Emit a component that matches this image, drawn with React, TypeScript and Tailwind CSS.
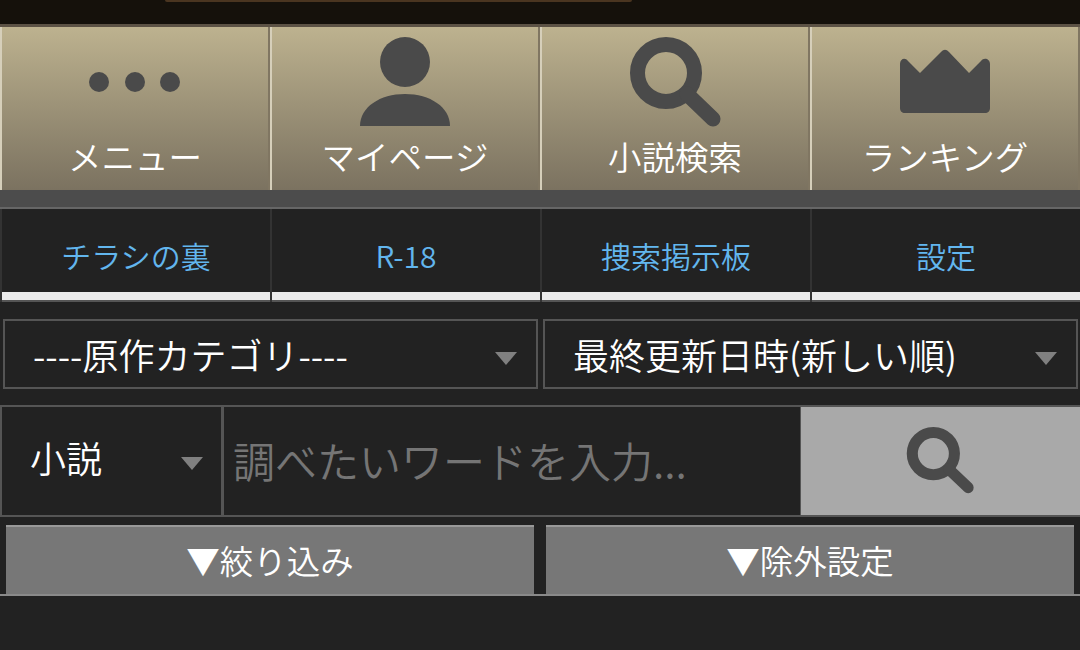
import React from "react";

const navItems = ["メニュー", "マイページ", "小説検索", "ランキング"];
const tabs = ["チラシの裏", "R-18", "捜索掲示板", "設定"];

function SearchIcon({ className }: { className: string }) {
  return (
    <svg viewBox="0 0 92 92" className={className}>
      <circle cx="37" cy="36" r="28.5" fill="none" stroke="#4a4a4a" strokeWidth="15" />
      <path d="M58 57L84 82" stroke="#4a4a4a" strokeWidth="15" strokeLinecap="round" />
    </svg>
  );
}

function NavIcon({ index }: { index: number }) {
  if (index === 0) {
    return (
      <svg viewBox="0 0 92 92" className="w-[92px] h-[92px]">
        <circle cx="10" cy="45" r="10" fill="#4a4a4a" />
        <circle cx="46" cy="45" r="10" fill="#4a4a4a" />
        <circle cx="81" cy="45" r="10" fill="#4a4a4a" />
      </svg>
    );
  }
  if (index === 1) {
    return (
      <svg viewBox="0 0 92 92" className="w-[92px] h-[92px]">
        <circle cx="46" cy="25" r="25" fill="#4a4a4a" />
        <path d="M1 89C1 70 21 57 46 57C71 57 91 70 91 89Z" fill="#4a4a4a" />
      </svg>
    );
  }
  if (index === 2) {
    return <SearchIcon className="w-[92px] h-[92px]" />;
  }
  return (
    <svg viewBox="0 0 92 92" className="w-[92px] h-[92px]">
      <path
        d="M1 27C1 22 6 20 9 24L21 36L42 15C45 12 47 12 50 15L70 36L82 24C85 20 91 22 91 27V71C91 74 89 76 86 76H6C3 76 1 74 1 71Z"
        fill="#4a4a4a"
      />
    </svg>
  );
}

function Caret({ className = "" }: { className?: string }) {
  return (
    <span
      className={
        "w-0 h-0 border-l-[11px] border-r-[11px] border-t-[13px] border-l-transparent border-r-transparent border-t-[#808080] " +
        className
      }
    />
  );
}

export default function App() {
  return (
    <div className="w-[1080px] h-[650px] overflow-hidden bg-[#222222] font-['Noto_Sans_CJK_JP','Noto_Sans',sans-serif]">
      <div className="h-[24px] bg-[#15110b]">
        <div className="ml-[165px] w-[467px] h-[2px] rounded-b-lg bg-[#4a3520]" />
      </div>
      <div className="h-[3px] bg-[#5c5245]" />

      <nav className="grid grid-cols-4 h-[163px]">
        {navItems.map((label, i) => (
          <a
            key={label}
            className="flex flex-col items-center border-l-2 border-r-2 border-l-[#d6cfba] border-r-[#807662] bg-gradient-to-b from-[#bdb28f] to-[#7b7260] pt-[10px]"
          >
            <NavIcon index={i} />
            <span className="mt-[4px] text-[33.5px] leading-[46px] text-white font-[350]">{label}</span>
          </a>
        ))}
      </nav>

      <div className="h-[17px] bg-[#4c4c4c]" />
      <div className="h-[2px] bg-[#666666]" />

      <div className="grid grid-cols-4 h-[93px]">
        {tabs.map((label) => (
          <a key={label} className="flex flex-col border-l-2 border-[#333333]">
            <span className="flex-1 flex items-center justify-center pt-[10px] text-[30px] font-[350] text-[#62b6ee]">
              {label}
            </span>
            <span className="h-[8px] bg-[#ebebeb]" />
            <span className="h-[2px] bg-[#555555]" />
          </a>
        ))}
      </div>

      <div className="flex gap-[5px] px-[3px] pr-[2px] pt-[17px]">
        <div className="flex-1 h-[70px] border-2 border-[#555555] flex items-center justify-between pl-[28px] pr-[19px]">
          <span className="text-[36px] font-[350] text-white">----原作カテゴリ----</span>
          <Caret className="mt-[9px]" />
        </div>
        <div className="flex-1 h-[70px] border-2 border-[#555555] flex items-center justify-between pl-[28px] pr-[19px]">
          <span className="text-[36px] font-[350] text-white">最終更新日時(新しい順)</span>
          <Caret className="mt-[9px]" />
        </div>
      </div>

      <div className="flex h-[112px] mt-[16px] border-y-2 border-[#555555]">
        <div className="w-[224px] border-l-2 border-r-[3px] border-[#555555] flex items-center justify-between pl-[28px] pr-[18px]">
          <span className="pb-[8px] text-[36px] font-[350] text-white">小説</span>
          <Caret className="mt-[5px]" />
        </div>
        <input
          placeholder="調べたいワードを入力..."
          className="flex-1 min-w-0 bg-transparent pl-[9px] pb-[4px] text-[42px] font-[350] outline-none placeholder:text-[#757575]"
        />
        <button className="w-[280px] bg-[#a9a9a9] border-l border-[#555555] flex items-center justify-center pr-[2px]">
          <SearchIcon className="w-[68px] h-[68px]" />
        </button>
      </div>

      <div className="flex justify-between px-[6px] pt-[8px]">
        <button className="w-[528px] h-[69px] bg-[#777777] border-t-2 border-[#999999] text-[33.5px] font-[350] text-white">
          ▼絞り込み
        </button>
        <button className="w-[528px] h-[69px] bg-[#777777] border-t-2 border-[#999999] text-[33.5px] font-[350] text-white">
          ▼除外設定
        </button>
      </div>
      <div className="h-[2px] bg-[#8a8a8a]" />
    </div>
  );
}
